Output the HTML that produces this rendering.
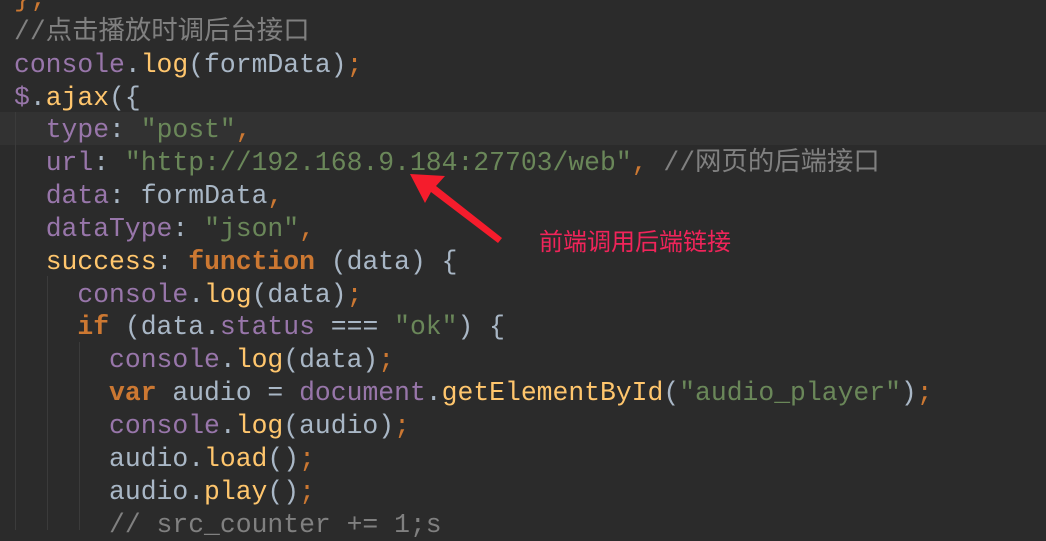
<!DOCTYPE html>
<html><head><meta charset="utf-8"><style>
html,body{margin:0;padding:0;}
body{width:1046px;height:530px;overflow:hidden;background:#2b2b2b;position:relative;}
.hl{position:absolute;left:0;top:112px;width:1046px;height:33px;background:#323232;}
.g{position:absolute;width:1px;background:#3b3b3b;}
pre{position:absolute;left:14px;top:-17px;margin:0;font-family:"Liberation Mono","Noto Sans CJK SC",monospace;font-size:26.4px;line-height:32.85px;color:#a9b7c6;}
.p{color:#9876aa}.y{color:#ffc66d}.o{color:#cc7832}.s{color:#6a8759}.c{color:#808080}
.b{font-weight:bold}
.red{position:absolute;left:539px;top:222px;font-family:"Noto Sans CJK SC",sans-serif;font-size:24px;color:#f0245a;}
</style></head><body>
<div class="hl"></div>
<div class="g" style="left:15px;top:112px;height:418px"></div>
<div class="g" style="left:47px;top:276px;height:254px"></div>
<div class="g" style="left:79px;top:342px;height:188px"></div>
<pre><span class="o">}</span><span class="o">;</span>
<span class="c">//点击播放时调后台接口</span>
<span class="p">console</span>.<span class="y">log</span>(formData)<span class="o">;</span>
<span class="p">$</span>.<span class="y">ajax</span>({
  <span class="p">type</span>: <span class="s">"post"</span><span class="o">,</span>
  <span class="p">url</span>: <span class="s">"http://192.168.9.184:27703/web"</span><span class="o">,</span> <span class="c">//网页的后端接口</span>
  <span class="p">data</span>: formData<span class="o">,</span>
  <span class="p">dataType</span>: <span class="s">"json"</span><span class="o">,</span>
  <span class="y">success</span>: <span class="o b">function</span> (data) {
    <span class="p">console</span>.<span class="y">log</span>(data)<span class="o">;</span>
    <span class="o b">if</span> (data.<span class="p">status</span> === <span class="s">"ok"</span>) {
      <span class="p">console</span>.<span class="y">log</span>(data)<span class="o">;</span>
      <span class="o b">var</span> audio = <span class="p">document</span>.<span class="y">getElementById</span>(<span class="s">"audio_player"</span>)<span class="o">;</span>
      <span class="p">console</span>.<span class="y">log</span>(audio)<span class="o">;</span>
      audio.<span class="y">load</span>()<span class="o">;</span>
      audio.<span class="y">play</span>()<span class="o">;</span>
      <span class="c">// src_counter += 1;s</span></pre>
<svg style="position:absolute;left:0;top:0" width="1046" height="530">
<polygon points="410,174 445,176 436,186 502,238 498,243 431,192 425,203" fill="#f51c2c"/>
</svg>
<div class="red">前端调用后端链接</div>
</body></html>
